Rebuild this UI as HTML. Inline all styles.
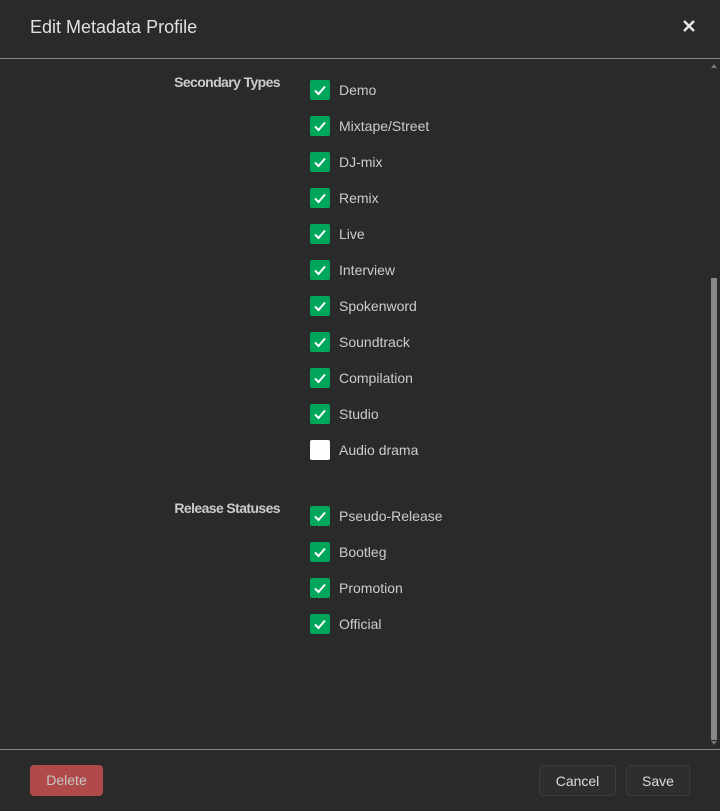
<!DOCTYPE html><html><head><style>
body{margin:0;width:720px;height:811px;background:#2a2a2a;font-family:"Liberation Sans",sans-serif;color:#ccc;overflow:hidden;position:relative}
.hdr{position:absolute;left:30px;top:17px;font-size:18px;color:#e0e0e0}
.x{position:absolute;left:681px;top:18px;width:16px;height:16px}
.line{position:absolute;left:0;width:720px;height:1px;background:#888}
.lbl{position:absolute;right:440px;font-size:14px;font-weight:bold;color:#ccc;letter-spacing:-0.6px}
.cb{position:absolute;left:310px;width:20px;height:20px;background:#00a65a;border-radius:2px}
.cb svg{position:absolute;left:3px;top:3px}
.cb.off{background:#fff}
.t{position:absolute;left:339px;font-size:14px;color:#ccc}
.btn{position:absolute;top:765px;height:31px;border-radius:4px;font-size:14px;line-height:31px;text-align:center;box-sizing:border-box}
.sb{position:absolute;left:711px;top:278px;width:6px;height:462px;background:#888}
</style></head><body>
<div class="hdr">Edit Metadata Profile</div>
<svg class="x" viewBox="0 0 16 16"><path d="M3 3L13 13M13 3L3 13" stroke="#e8e8e8" stroke-width="2.4"/></svg>
<div class="line" style="top:58px"></div>
<div class="line" style="top:749px"></div>
<svg style="position:absolute;left:711px;top:64px" width="6" height="4"><path d="M0 4L3 0L6 4Z" fill="#777"/></svg>
<svg style="position:absolute;left:711px;top:741px" width="6" height="4"><path d="M0 0L3 4L6 0Z" fill="#777"/></svg>
<div class="sb"></div>
<div class="lbl" style="top:74px">Secondary Types</div>
<div class="lbl" style="top:500px">Release Statuses</div>
<div id="items"></div>
<div class="btn" style="left:30px;width:73px;background:#b04a4a;color:#c8c8c8">Delete</div>
<div class="btn" style="left:539px;width:77px;background:#2e2e2e;border:1px solid #3c3c3c;color:#ddd">Cancel</div>
<div class="btn" style="left:626px;width:64px;background:#2e2e2e;border:1px solid #3c3c3c;color:#ddd">Save</div>
<script>
var a=["Demo","Mixtape/Street","DJ-mix","Remix","Live","Interview","Spokenword","Soundtrack","Compilation","Studio","Audio drama"],b=["Pseudo-Release","Bootleg","Promotion","Official"],h="";
function add(n,y,on){h+='<div class="cb'+(on?'':' off')+'" style="top:'+y+'px">'+(on?'<svg width="14" height="14" viewBox="0 0 14 14"><path d="M2 7.5L5.5 11L12 3.5" fill="none" stroke="#fff" stroke-width="2"/></svg>':'')+'</div><div class="t" style="top:'+(y+2)+'px">'+n+'</div>';}
a.forEach(function(n,i){add(n,80+36*i,n!="Audio drama")});
b.forEach(function(n,i){add(n,506+36*i,true)});
document.getElementById("items").innerHTML=h;
</script>
</body></html>
